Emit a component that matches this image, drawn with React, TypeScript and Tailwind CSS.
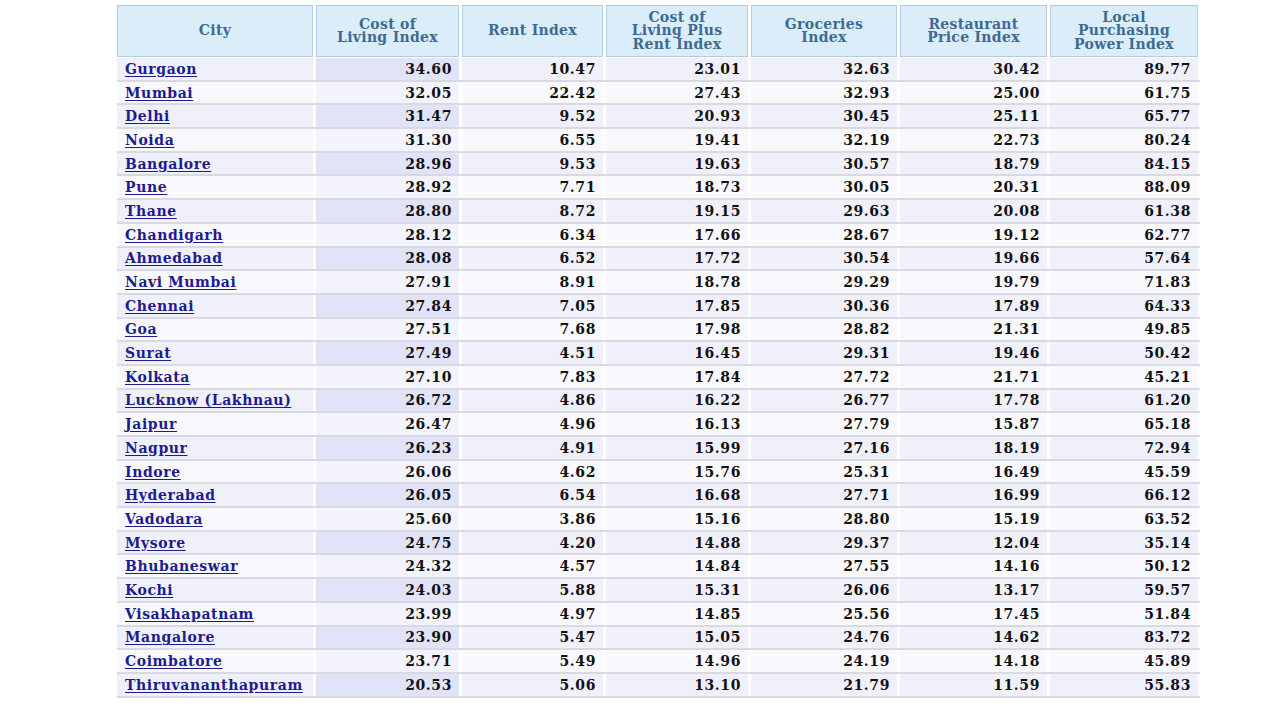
import React from 'react'

type Row = [string, string, string, string, string, string, string]

const ROWS: Row[] = [
  ['Gurgaon', '34.60', '10.47', '23.01', '32.63', '30.42', '89.77'],
  ['Mumbai', '32.05', '22.42', '27.43', '32.93', '25.00', '61.75'],
  ['Delhi', '31.47', '9.52', '20.93', '30.45', '25.11', '65.77'],
  ['Noida', '31.30', '6.55', '19.41', '32.19', '22.73', '80.24'],
  ['Bangalore', '28.96', '9.53', '19.63', '30.57', '18.79', '84.15'],
  ['Pune', '28.92', '7.71', '18.73', '30.05', '20.31', '88.09'],
  ['Thane', '28.80', '8.72', '19.15', '29.63', '20.08', '61.38'],
  ['Chandigarh', '28.12', '6.34', '17.66', '28.67', '19.12', '62.77'],
  ['Ahmedabad', '28.08', '6.52', '17.72', '30.54', '19.66', '57.64'],
  ['Navi Mumbai', '27.91', '8.91', '18.78', '29.29', '19.79', '71.83'],
  ['Chennai', '27.84', '7.05', '17.85', '30.36', '17.89', '64.33'],
  ['Goa', '27.51', '7.68', '17.98', '28.82', '21.31', '49.85'],
  ['Surat', '27.49', '4.51', '16.45', '29.31', '19.46', '50.42'],
  ['Kolkata', '27.10', '7.83', '17.84', '27.72', '21.71', '45.21'],
  ['Lucknow (Lakhnau)', '26.72', '4.86', '16.22', '26.77', '17.78', '61.20'],
  ['Jaipur', '26.47', '4.96', '16.13', '27.79', '15.87', '65.18'],
  ['Nagpur', '26.23', '4.91', '15.99', '27.16', '18.19', '72.94'],
  ['Indore', '26.06', '4.62', '15.76', '25.31', '16.49', '45.59'],
  ['Hyderabad', '26.05', '6.54', '16.68', '27.71', '16.99', '66.12'],
  ['Vadodara', '25.60', '3.86', '15.16', '28.80', '15.19', '63.52'],
  ['Mysore', '24.75', '4.20', '14.88', '29.37', '12.04', '35.14'],
  ['Bhubaneswar', '24.32', '4.57', '14.84', '27.55', '14.16', '50.12'],
  ['Kochi', '24.03', '5.88', '15.31', '26.06', '13.17', '59.57'],
  ['Visakhapatnam', '23.99', '4.97', '14.85', '25.56', '17.45', '51.84'],
  ['Mangalore', '23.90', '5.47', '15.05', '24.76', '14.62', '83.72'],
  ['Coimbatore', '23.71', '5.49', '14.96', '24.19', '14.18', '45.89'],
  ['Thiruvananthapuram', '20.53', '5.06', '13.10', '21.79', '11.59', '55.83'],
]

const HEADERS: string[][] = [
  ['City'],
  ['Cost of', 'Living Index'],
  ['Rent Index'],
  ['Cost of', 'Living Plus', 'Rent Index'],
  ['Groceries', 'Index'],
  ['Restaurant', 'Price Index'],
  ['Local', 'Purchasing', 'Power Index'],
]

const cols = 'grid grid-cols-[196px_143px_141px_142px_146px_147px_148px] gap-x-[3px]'

function HeaderCell({ lines }: { lines: string[] }) {
  return (
    <div className="h-[52px] border border-[#b3cce2] bg-[#dcedfa] flex flex-col items-center justify-center text-[#3b6b93] text-[14px] leading-[13.5px] tracking-[0.3px] font-bold">
      {lines.map((l) => (
        <span key={l} className="whitespace-nowrap">{l}</span>
      ))}
    </div>
  )
}

function DataRow({ row, odd }: { row: Row; odd: boolean }) {
  const base = odd ? 'bg-[#f0f0fb]' : 'bg-[#f8f8fd]'
  const sorted = odd ? 'bg-[#e1e3f9]' : 'bg-[#f2f3fd]'
  return (
    <div className={`${cols} h-[23.69px] border-b-2 border-[#d8d9e1]`}>
      <div className={`${base} flex items-center pl-[8px]`}>
        <a href="#" className="text-[#1d1c8f] underline underline-offset-2 whitespace-nowrap">{row[0]}</a>
      </div>
      {row.slice(1).map((v, i) => (
        <div key={i} className={`${i === 0 ? sorted : base} flex items-center justify-end pr-[7px] text-[#111]`}>
          {v}
        </div>
      ))}
    </div>
  )
}

export default function App() {
  return (
    <div className="w-[1280px] h-[720px] bg-white overflow-hidden" style={{ fontFamily: '"DejaVu Serif", "Liberation Serif", serif' }}>
      <div className="ml-[117px] mt-[5px] w-[1083px]">
        <div className={`${cols} mb-[1px]`}>
          {HEADERS.map((h, i) => (
            <HeaderCell key={i} lines={h} />
          ))}
        </div>
        <div className="font-bold text-[14px] tracking-[0.6px] leading-none">
          {ROWS.map((r, i) => (
            <DataRow key={r[0]} row={r} odd={i % 2 === 0} />
          ))}
        </div>
      </div>
    </div>
  )
}
